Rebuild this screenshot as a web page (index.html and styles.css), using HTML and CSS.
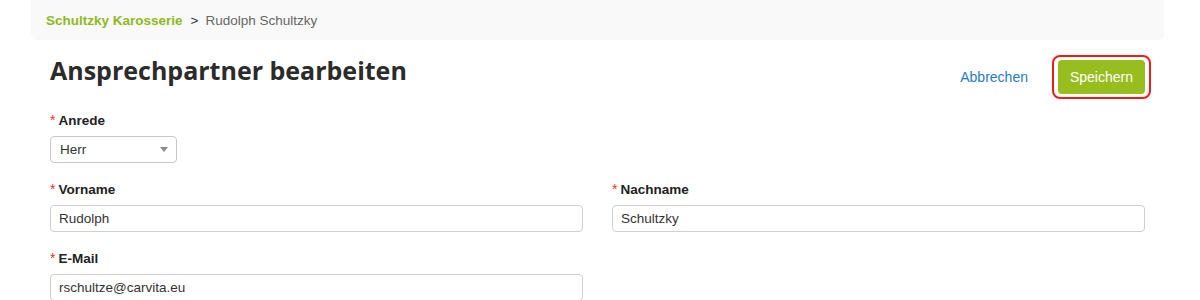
FILE: index.html
```html
<!DOCTYPE html>
<html lang="de">
<head>
    <meta charset="UTF-8">
    <title>Ansprechpartner bearbeiten</title>
    <link rel="stylesheet" href="styles.css">
</head>
<body>
    <nav class="breadcrumb">
        <a href="#" class="crumb-link">Schultzky Karosserie</a>
        <span class="crumb-sep">&gt;</span>
        <span class="crumb-current">Rudolph Schultzky</span>
    </nav>

    <main class="page">
        <header class="page-header">
            <h1>Ansprechpartner bearbeiten</h1>
            <div class="actions">
                <a href="#" class="cancel">Abbrechen</a>
                <span class="highlight">
                    <button type="submit" class="save">Speichern</button>
                </span>
            </div>
        </header>

        <form class="form">
            <div class="field">
                <label class="required" for="anrede">Anrede</label>
                <div class="select">
                    <span>Herr</span>
                    <svg width="8" height="5" viewBox="0 0 8 5"><path d="M0 0h8L4 5z" fill="#8a8a8a"/></svg>
                </div>
            </div>

            <div class="row">
                <div class="field">
                    <label class="required" for="vorname">Vorname</label>
                    <input class="input" id="vorname" type="text" value="Rudolph">
                </div>
                <div class="field">
                    <label class="required" for="nachname">Nachname</label>
                    <input class="input" id="nachname" type="text" value="Schultzky">
                </div>
            </div>

            <div class="row">
                <div class="field">
                    <label class="required" for="email">E-Mail</label>
                    <input class="input" id="email" type="text" value="rschultze@carvita.eu">
                </div>
                <div class="field"></div>
            </div>
        </form>
    </main>
</body>
</html>
```

FILE: styles.css
```css
body {
    margin: 0;
    font-family: "Liberation Sans", Arial, sans-serif;
    color: #333;
    background: #fff;
}

.breadcrumb {
    margin: 0 36px 0 31px;
    height: 40px;
    padding: 0 15px;
    display: flex;
    align-items: center;
    gap: 7px;
    background-color: #f9f9f9;
    border-radius: 0 0 5px 5px;
    font-size: 13.5px;
}

.crumb-link {
    color: #8cb91c;
    font-weight: bold;
    text-decoration: none;
}

.crumb-sep {
    color: #333;
    margin-left: 1px;
}

.crumb-current {
    color: #666;
}

.page {
    padding: 0 55px 0 50px;
}

.page-header {
    display: flex;
    justify-content: space-between;
    align-items: flex-start;
    margin-top: 13px;
}

h1 {
    margin: 0;
    font-family: "Open Sans", sans-serif;
    font-size: 25px;
    line-height: 34px;
    font-weight: bold;
    color: #2b2b2b;
}

.actions {
    display: flex;
    align-items: center;
    gap: 24px;
    margin-top: 2px;
}

.cancel {
    color: #2a7ac0;
    font-size: 14px;
    text-decoration: none;
}

.highlight {
    display: flex;
    padding: 3px 4px;
    border: 2px solid #ee1c1c;
    border-radius: 8px;
    margin-right: -6px;
}

.save {
    height: 34px;
    padding: 0 12px;
    background-color: #97bd1f;
    color: #fff;
    border: none;
    border-radius: 4px;
    font-family: "Liberation Sans", Arial, sans-serif;
    font-size: 14px;
}

.form {
    margin-top: 13px;
}

.row {
    display: grid;
    grid-template-columns: 1fr 1fr;
    column-gap: 29px;
    margin-top: 18px;
}

.field {
    display: flex;
    flex-direction: column;
    align-items: flex-start;
}

label {
    font-size: 13.5px;
    font-weight: bold;
    color: #222;
    line-height: 16px;
    margin-bottom: 7px;
}

.required::before {
    content: "*";
    color: #e5332a;
    font-weight: normal;
    font-size: 14px;
    margin-right: 3px;
}

.select {
    width: 127px;
    height: 27px;
    box-sizing: border-box;
    display: flex;
    align-items: center;
    justify-content: space-between;
    padding: 0 8px 0 9px;
    border: 1px solid #c8c8c8;
    border-radius: 4px;
    font-size: 13.5px;
    color: #333;
}

.input {
    width: 100%;
    height: 27px;
    box-sizing: border-box;
    margin: 0;
    padding: 0 8px;
    border: 1px solid #cfcfcf;
    border-radius: 4px;
    font-family: "Liberation Sans", Arial, sans-serif;
    font-size: 13.5px;
    color: #333;
}
```
